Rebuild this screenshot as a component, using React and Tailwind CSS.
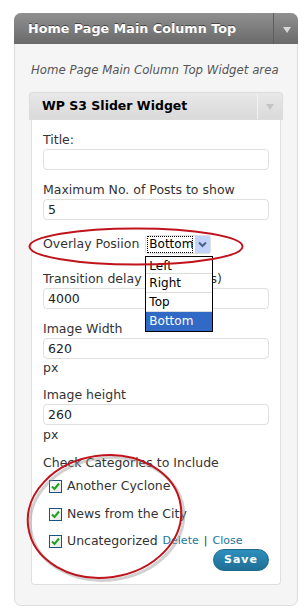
// App.jsx – WordPress "WP S3 Slider Widget" settings panel

function Field({ label, value, className = "" }) {
  return (
    <div className={className}>
      <div className="h-[16px] leading-[16px]">{label}</div>
      <div className="mt-px h-[21px] w-[226px] rounded-[4px] border border-[#dfdfdf] bg-white pl-[4px] leading-[19px] text-[#222]">
        {value}
      </div>
    </div>
  );
}

function Check({ label, children, className = "" }) {
  return (
    <div className={`flex h-[16px] items-center pl-[6px] ${className}`}>
      <span className="flex h-[13px] w-[13px] items-center justify-center border border-[#1c5180] bg-gradient-to-br from-white to-[#e8e8e8]">
        <svg width="11" height="11" viewBox="0 0 11 11">
          <path d="M2 5.5 L4.5 8 L9 2.5" fill="none" stroke="#1fa31f" strokeWidth="2" />
        </svg>
      </span>
      <span className="ml-[5px]">{label}</span>
      {children}
    </div>
  );
}

function DownArrow({ color }) {
  return (
    <svg width="8" height="6" viewBox="0 0 8 6">
      <polygon points="0,0 8,0 4,6" fill={color} />
    </svg>
  );
}

export default function App() {
  return (
    <div className="relative h-[612px] w-[304px] bg-white font-['DejaVu_Sans',sans-serif] text-[12.5px] text-[#333]">
      <div className="ml-[14px] pt-[13px]">
        <div className="w-[284px] rounded-[7px] border border-[#dcdcdc] bg-[#f5f5f5] pb-[20px]">
          {/* dark sidebar header */}
          <div className="-mx-px -mt-px flex h-[31px] rounded-t-[7px] bg-gradient-to-b from-[#909090] to-[#6a6a6a]">
            <div className="flex flex-1 items-center pl-[14px] text-[12.75px] font-bold text-white [text-shadow:0_-1px_0_#444]">
              Home Page Main Column Top
            </div>
            <div className="flex w-[25px] items-center justify-center border-l border-[#5e5e5e] pl-[2px] pt-[2px]">
              <DownArrow color="#d8d8d8" />
            </div>
          </div>

          <div className="pl-[16px] pt-[19px] text-[11.75px] italic leading-[14px] text-[#555]">
            Home Page Main Column Top Widget area
          </div>

          {/* widget box */}
          <div className="mt-[15px] px-[14px]">
            <div className="flex h-[28px] rounded-t-[3px] border border-[#dcdcdc] bg-gradient-to-b from-[#e8e8e8] to-[#dadada]">
              <div className="flex flex-1 items-center pl-[12px] text-[12.5px] font-bold text-black">
                WP S3 Slider Widget
              </div>
              <div className="flex w-[25px] items-center justify-center border-l border-[#f2f2f2] pt-[2px]">
                <DownArrow color="#c4c4c4" />
              </div>
            </div>

            <div className="mx-[2px] rounded-b-[4px] border-x border-b border-[#dfdfdf] bg-white px-[11px] pb-[13px] pt-[12px]">
              <Field label="Title:" value="" />
              <Field label="Maximum No. of Posts to show" value="5" className="mt-[12px]" />

              {/* overlay position select */}
              <div className="mt-[14px] flex h-[20px] items-center">
                <span>Overlay Posiion</span>
                <div className="relative ml-[6px] flex h-[19px] w-[66px] items-center rounded-[3px] border border-[#dfdfdf] bg-white text-[12px]">
                  <span className="ml-px h-[17px] w-[46px] border border-dotted border-black pl-px leading-[15px] text-black">
                    Bottom
                  </span>
                  <span className="ml-[2px] flex h-[17px] w-[15px] items-center justify-center bg-[#c3d3fb]">
                    <svg width="9" height="7" viewBox="0 0 9 7">
                      <path d="M1 1.5 L4.5 5 L8 1.5" fill="none" stroke="#4d6185" strokeWidth="2" />
                    </svg>
                  </span>
                  {/* open list */}
                  <div className="absolute left-[-1px] top-[20px] z-10 w-[68px] border border-black bg-white text-black">
                    <div className="flex h-[17px] items-end overflow-hidden border-b border-[#dcdcdc] pl-[3px] leading-[15px]">
                      <span className="-mb-[1px]">Left</span>
                    </div>
                    <div className="h-[19px] border-b border-[#dcdcdc] pl-[3px] leading-[18px]">Right</div>
                    <div className="h-[19px] border-b border-[#dcdcdc] pl-[3px] leading-[18px]">Top</div>
                    <div className="h-[19px] bg-[#316ac5] pl-[3px] leading-[19px] text-white">Bottom</div>
                  </div>
                </div>
              </div>

              <Field label="Transition delay (in seconds)" value="4000" className="mt-[17px]" />
              <Field label="Image Width" value="620" className="mt-[12px]" />
              <div className="mt-px h-[16px] leading-[16px]">px</div>
              <Field label="Image height" value="260" className="mt-[11px]" />
              <div className="mt-[2px] h-[16px] leading-[16px]">px</div>

              <div className="mt-[12px] h-[16px] leading-[16px]">Check Categories to Include</div>
              <Check label="Another Cyclone" className="mt-[7px]" />
              <Check label="News from the City" className="mt-[12px]" />
              <Check label="Uncategorized" className="mt-[11px]">
                <span className="ml-[5px] text-[11px] text-[#21759b]">Delete</span>
                <span className="mx-[5px] text-[11px]">|</span>
                <span className="text-[11px] text-[#21759b]">Close</span>
              </Check>

              <div className="flex justify-end">
                <button className="h-[22px] w-[56px] rounded-full border border-[#1e6a8d] bg-gradient-to-b from-[#2e8fbd] to-[#1f6f96] text-[11px] font-bold tracking-[1px] text-white">
                  Save
                </button>
              </div>
            </div>
          </div>
        </div>
      </div>

      {/* red highlight ellipses drawn over the screenshot */}
      <svg className="pointer-events-none absolute left-0 top-0 z-20" width="304" height="612" viewBox="0 0 304 612">
        <ellipse cx="136" cy="246.5" rx="106.5" ry="18" fill="none" stroke="#c0141c" strokeWidth="2" />
        <ellipse cx="107" cy="519" rx="77" ry="61" fill="none" stroke="#999" strokeOpacity="0.45" strokeWidth="3" transform="rotate(-8 107 519)" />
        <ellipse cx="104.5" cy="516.5" rx="77" ry="61" fill="none" stroke="#c0141c" strokeWidth="2" transform="rotate(-8 104.5 516.5)" />
      </svg>
    </div>
  );
}
